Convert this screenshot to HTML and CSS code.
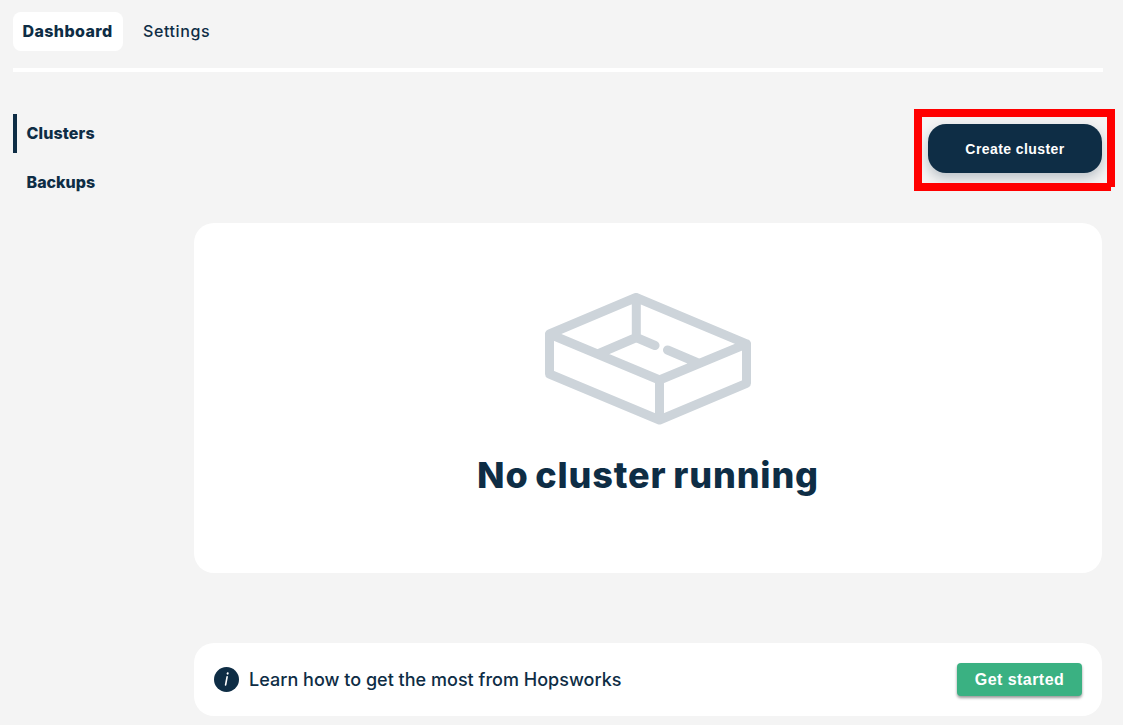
FILE: index.html
```html
<!DOCTYPE html>
<html lang="en">
<head>
<meta charset="utf-8">
<title>Dashboard</title>
<link rel="stylesheet" href="styles.css">
</head>
<body>
<header class="topbar">
  <nav class="tabs">
    <a class="tab tab-active"><span>Dashboard</span></a>
    <a class="tab"><span>Settings</span></a>
  </nav>
</header>
<div class="layout">
  <nav class="sidebar">
    <a class="side-link side-active"><span>Clusters</span></a>
    <a class="side-link"><span>Backups</span></a>
  </nav>
  <main class="content">
    <div class="actions">
      <div class="action-wrap">
        <button class="create">Create cluster</button>
        <div class="highlight"></div>
      </div>
    </div>
    <section class="empty">
      <svg class="box" width="208" height="134" viewBox="544 292 208 134">
        <path d="M549.5 334 636 297.5 746.5 343.8 659.5 380ZM549.5 334V374L659.5 420 746.5 383.3V343.8M659.5 380V420M636.3 297.5V337.5M599 353.5 636.3 337.5 655 345.5M667.5 350 698 363"/>
      </svg>
      <h1 class="title">No cluster running</h1>
    </section>
    <section class="learn">
      <svg class="info" width="25" height="25" viewBox="0 0 25 25">
        <circle cx="12.5" cy="12.5" r="12.5"/>
        <path d="M13.1 9.9 11.6 17.9"/>
        <path class="dot" d="M13.7 6.3 13.6 6.6"/>
      </svg>
      <p class="learn-text">Learn how to get the most from Hopsworks</p>
      <button class="start">Get started</button>
    </section>
  </main>
</div>
</body>
</html>
```
FILE: styles.css
```css
* { box-sizing: border-box; }
body {
  margin: 0;
  height: 725px;
  overflow: hidden;
  padding: 12px 21px 0 13px;
  background: #f4f4f4;
  color: #0e2d45;
  font-family: Inter, sans-serif;
  font-size: 16px;
}
.topbar { height: 60px; width: 1090px; border-bottom: 4px solid #fff; }
.tabs { display: flex; gap: 10px; }
.tab { height: 39px; padding: 0 10px 2px; display: flex; align-items: center; font-weight: 500; letter-spacing: .6px; border-radius: 8px; white-space: nowrap; }
.tab-active { width: 110px; padding-left: 9.5px; background: #fff; font-weight: 800; letter-spacing: .4px; }
.layout { display: flex; padding-top: 42px; }
.sidebar { width: 181px; display: flex; flex-direction: column; gap: 10px; }
.side-link { height: 39px; padding: 0 0 2px 9.5px; display: flex; align-items: center; font-weight: 800; letter-spacing: 0; border-left: 4px solid transparent; }
.side-active { border-color: #0e2d45; letter-spacing: .12px; }
.content { width: 908px; flex: none; }
.actions { display: flex; justify-content: flex-end; padding-top: 10px; height: 109px; }
.action-wrap { position: relative; width: 174px; height: 49px; }
button { border: 0; padding: 0; color: #fff; font-family: "Liberation Sans", Arial, sans-serif; font-weight: 700; white-space: nowrap; }
.create { width: 174px; height: 49px; border-radius: 18px; background: #0e2d45; font-size: 14px; letter-spacing: .42px; box-shadow: 0 5px 12px rgba(14,45,69,.25); }
.highlight { position: absolute; left: -14px; top: -15px; width: 201px; height: 82px; border: 8px solid #f00; clip-path: polygon(0 0, 100% 0, 100% 78px, 197px 78px, 197px 100%, 0 100%); pointer-events: none; }
.empty { height: 350px; padding-top: 69px; display: flex; flex-direction: column; align-items: center; background: #fff; border-radius: 20px; }
.box { fill: none; stroke: #cdd4da; stroke-width: 9; stroke-linecap: round; stroke-linejoin: round; }
.title { margin: 26px 0 0; font-size: 36px; line-height: 46px; font-weight: 800; letter-spacing: .85px; word-spacing: -2px; white-space: nowrap; }
.learn { margin-top: 70px; height: 73px; padding: 0 20px; display: flex; align-items: center; background: #fff; border-radius: 20px; }
.info { fill: #0e2d45; }
.info path { stroke: #fff; stroke-width: 1.6; stroke-linecap: round; }
.info .dot { stroke-width: 2; }
.learn-text { margin: 0 auto 0 10px; font-size: 18px; font-weight: 500; letter-spacing: .015px; white-space: nowrap; }
.start { width: 125px; height: 33px; border-radius: 4px; background: #3ab182; font-size: 16px; letter-spacing: .45px; box-shadow: 0 2px 3px rgba(0,0,0,.4); }
```
